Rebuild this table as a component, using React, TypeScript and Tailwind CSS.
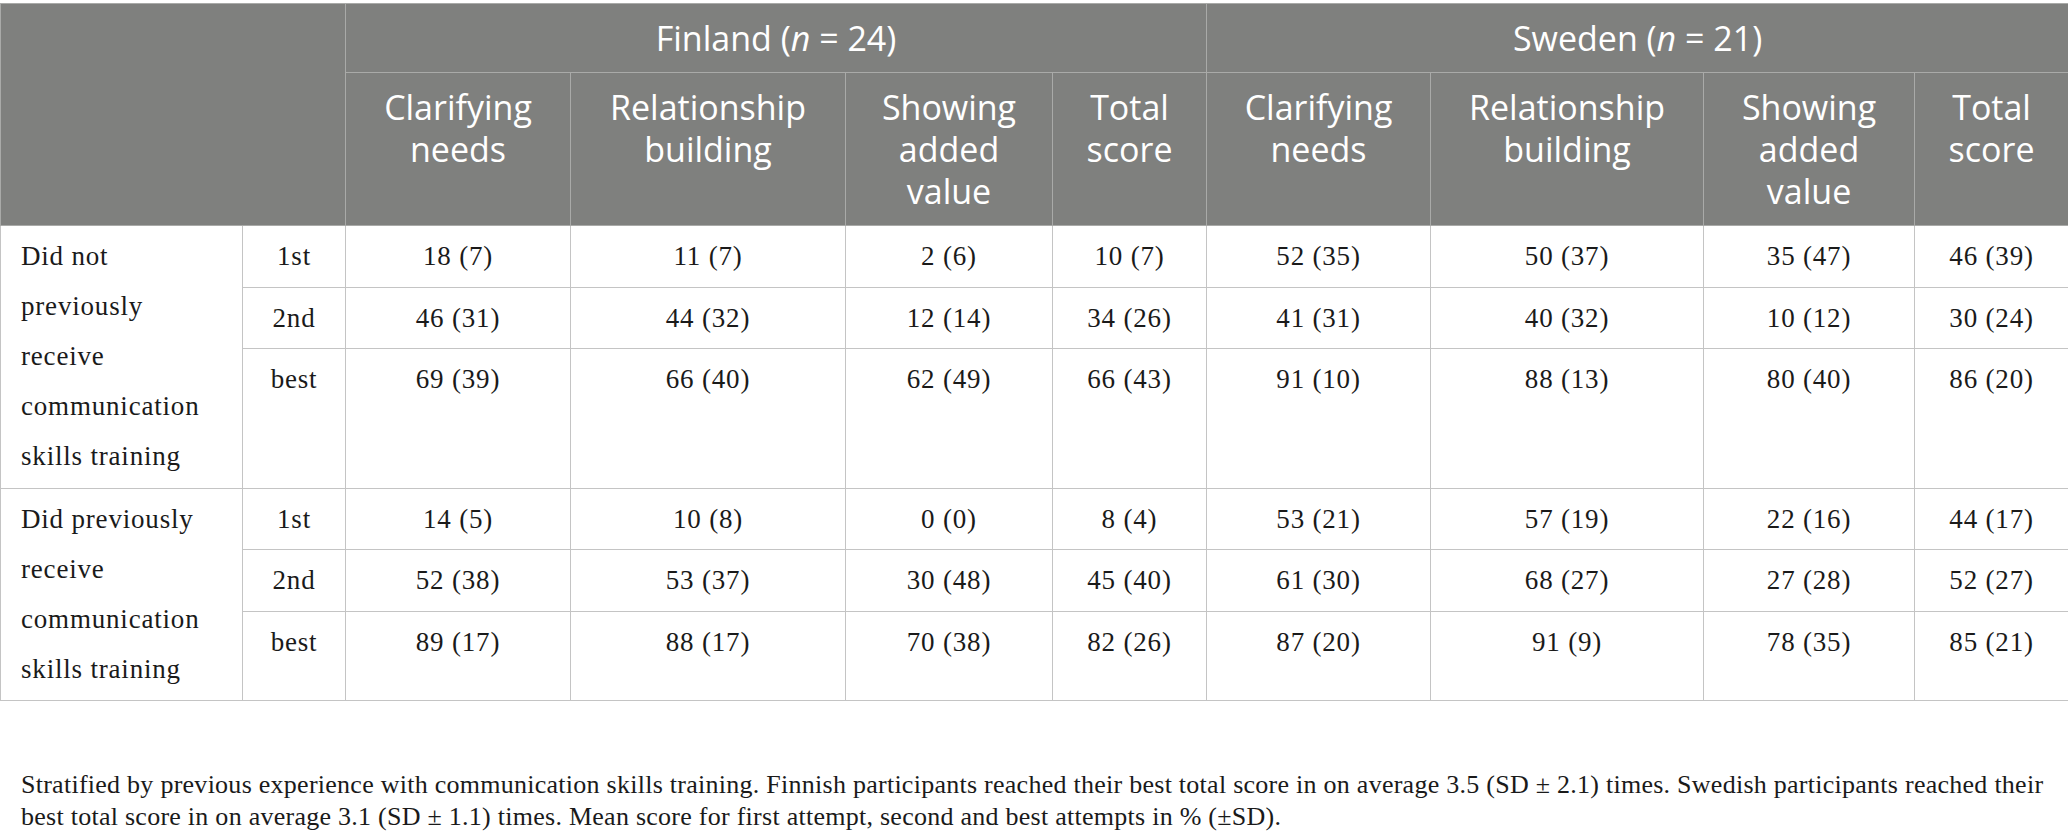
const groups = [
  {
    label: 'Did not previously receive communication skills training',
    heights: ['h-[62px]', 'h-[61px]', 'h-[140px]'],
    rows: [
      { attempt: '1st', fi: ['18 (7)', '11 (7)', '2 (6)', '10 (7)'], se: ['52 (35)', '50 (37)', '35 (47)', '46 (39)'] },
      { attempt: '2nd', fi: ['46 (31)', '44 (32)', '12 (14)', '34 (26)'], se: ['41 (31)', '40 (32)', '10 (12)', '30 (24)'] },
      { attempt: 'best', fi: ['69 (39)', '66 (40)', '62 (49)', '66 (43)'], se: ['91 (10)', '88 (13)', '80 (40)', '86 (20)'] },
    ],
  },
  {
    label: 'Did previously receive communication skills training',
    heights: ['h-[60px]', 'h-[62px]', 'h-[89px]'],
    rows: [
      { attempt: '1st', fi: ['14 (5)', '10 (8)', '0 (0)', '8 (4)'], se: ['53 (21)', '57 (19)', '22 (16)', '44 (17)'] },
      { attempt: '2nd', fi: ['52 (38)', '53 (37)', '30 (48)', '45 (40)'], se: ['61 (30)', '68 (27)', '27 (28)', '52 (27)'] },
      { attempt: 'best', fi: ['89 (17)', '88 (17)', '70 (38)', '82 (26)'], se: ['87 (20)', '91 (9)', '78 (35)', '85 (21)'] },
    ],
  },
]

const measures = [['Clarifying', 'needs'], ['Relationship', 'building'], ['Showing', 'added', 'value'], ['Total', 'score']]

const headCell = 'border border-[#a9aaa8] px-2 pt-[13px] pb-[13px] align-top text-center font-normal'
const bodyCell = 'border border-[#c4c4c4] py-[5px] px-2 align-top text-center'

const App = () => {
  return (
    <div className="min-h-[837px] w-[2068px] bg-white pt-[3px] text-[#1a1a1a]">
      <table className="w-[2068px] table-fixed border-collapse">
        <colgroup>
          <col className="w-[242px]" />
          <col className="w-[103px]" />
          <col className="w-[225px]" />
          <col className="w-[275px]" />
          <col className="w-[207px]" />
          <col className="w-[154px]" />
          <col className="w-[224px]" />
          <col className="w-[273px]" />
          <col className="w-[211px]" />
          <col className="w-[154px]" />
        </colgroup>
        <thead className="bg-[#7f807e] text-[34px] leading-[42px] text-white [font-family:'Open_Sans',sans-serif]">
          <tr className="border-t border-[#c8c8c8]">
            <th colSpan={2} rowSpan={2} className="border border-[#a9aaa8]" />
            <th colSpan={4} className={headCell}>
              Finland (<i>n</i> = 24)
            </th>
            <th colSpan={4} className={headCell}>
              Sweden (<i>n</i> = 21)
            </th>
          </tr>
          <tr>
            {[...measures, ...measures].map((m, i) => (
              <th key={i} className={headCell}>
                {m.map((w) => (
                  <div key={w}>{w}</div>
                ))}
              </th>
            ))}
          </tr>
        </thead>
        <tbody className="text-[27px] leading-[50px] tracking-[0.03em] [font-family:'Liberation_Serif',serif]">
          {groups.map((g) =>
            g.rows.map((r, ri) => (
              <tr key={g.label + r.attempt} className={g.heights[ri]}>
                {ri === 0 && (
                  <td rowSpan={3} className="border border-[#c4c4c4] py-[5px] pl-[20px] pr-[30px] align-top text-left">
                    {g.label}
                  </td>
                )}
                <td className={bodyCell}>{r.attempt}</td>
                {[...r.fi, ...r.se].map((v, i) => (
                  <td key={i} className={bodyCell}>
                    {v}
                  </td>
                ))}
              </tr>
            ))
          )}
        </tbody>
      </table>
      <p className="mt-[68px] pl-[21px] text-[26px] leading-[32px] tracking-[0.01em] [font-family:'Liberation_Serif',serif]">
        Stratified by previous experience with communication skills training. Finnish participants reached their best total score in on average 3.5 (SD ± 2.1) times. Swedish participants reached their best total score in on average 3.1 (SD ± 1.1) times. Mean score for first attempt, second and best attempts in % (±SD).
      </p>
    </div>
  )
}

export default App
